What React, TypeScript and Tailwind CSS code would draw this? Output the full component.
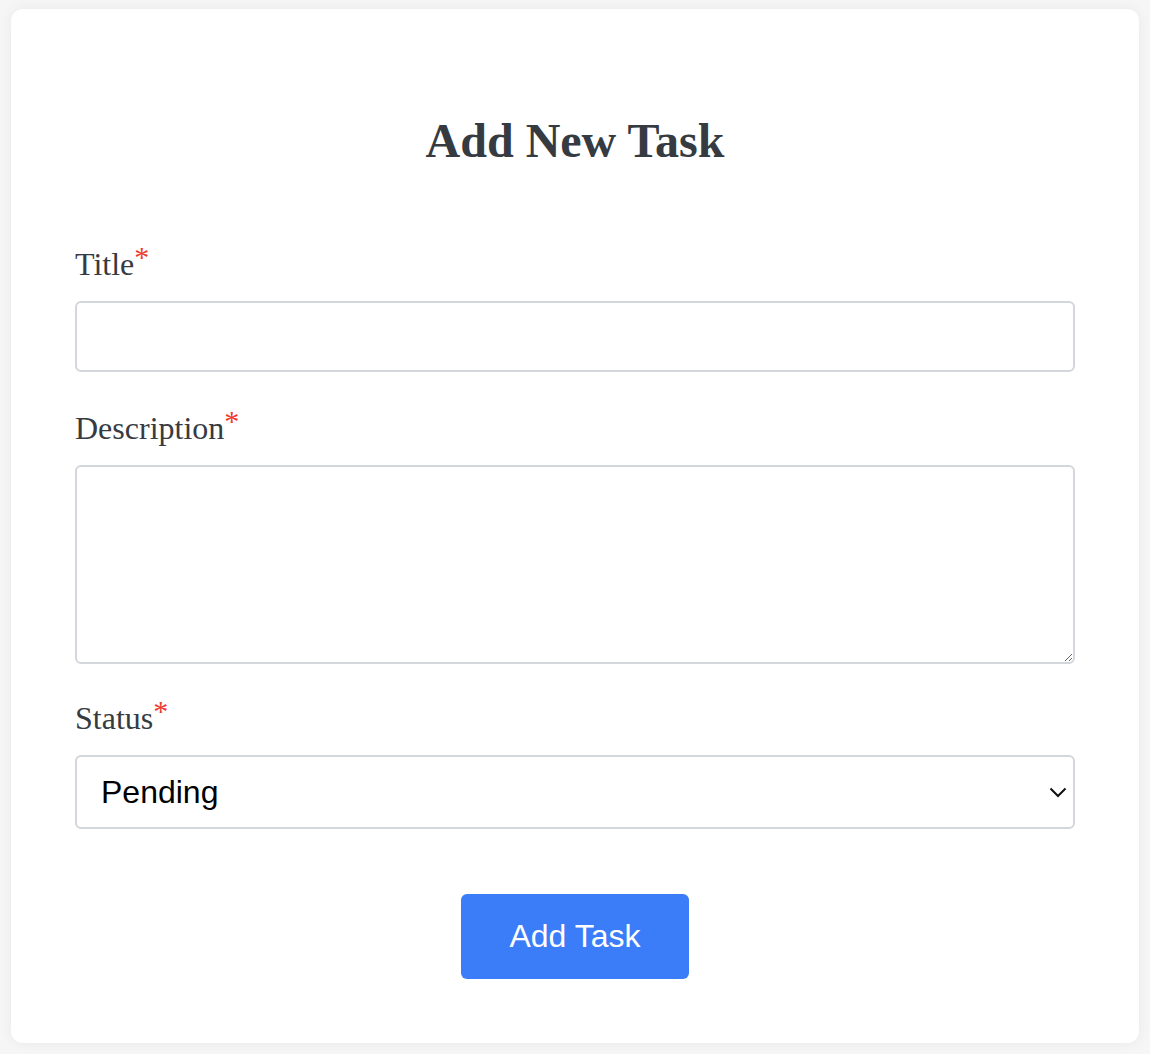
import React, { useState } from "react";

const serif = { fontFamily: '"Liberation Serif", "Times New Roman", serif' };
const sans = { fontFamily: '"Liberation Sans", Arial, sans-serif' };

const Label: React.FC<{ text: string; htmlFor: string }> = ({ text, htmlFor }) => (
  <label
    htmlFor={htmlFor}
    className="block text-[32px] leading-[40px] text-[#363b42]"
    style={serif}
  >
    {text}
    <span className="relative -top-[8px] text-[30px] text-[#ef3b2c]">*</span>
  </label>
);

const App: React.FC = () => {
  const [title, setTitle] = useState("");
  const [description, setDescription] = useState("");
  const [status, setStatus] = useState("Pending");

  // Handle form submit
  const handleSubmit = (e: React.FormEvent) => {
    e.preventDefault();
  };

  return (
    <div className="min-h-screen bg-[#f6f6f6] px-[11px] pt-[9px] pb-[10px]">
      <div className="rounded-xl bg-white px-[64px] pt-[103px] pb-[64px] shadow-[0_0_14px_rgba(0,0,0,0.06)]">
        <h1
          className="text-center text-[48px] font-bold leading-[1.2] text-[#363b42]"
          style={serif}
        >
          Add New Task
        </h1>

        <form onSubmit={handleSubmit} className="mt-[74px]">
          {/* Title */}
          <Label text="Title" htmlFor="title" />
          <input
            id="title"
            value={title}
            onChange={(e) => setTitle(e.target.value)}
            className="mt-[16px] block h-[71px] w-full rounded-md border-2 border-[#d3d6db] px-6 text-[32px] outline-none"
            style={sans}
          />

          {/* Description */}
          <div className="mt-[36px]">
            <Label text="Description" htmlFor="description" />
          </div>
          <textarea
            id="description"
            value={description}
            onChange={(e) => setDescription(e.target.value)}
            className="mt-[16px] block h-[199px] w-full rounded-md border-2 border-[#d3d6db] px-6 py-3 text-[32px] outline-none"
            style={sans}
          />

          {/* Status */}
          <div className="mt-[34px]">
            <Label text="Status" htmlFor="status" />
          </div>
          <div className="relative mt-[16px]">
            <select
              id="status"
              value={status}
              onChange={(e) => setStatus(e.target.value)}
              className="block h-[74px] w-full appearance-none rounded-md border-2 border-[#d3d6db] bg-white pl-[24px] text-[32px] text-black outline-none"
              style={sans}
            >
              <option>Pending</option>
              <option>In Progress</option>
              <option>Completed</option>
            </select>
            <svg
              className="pointer-events-none absolute right-[8px] top-[32px]"
              width="18"
              height="11"
              viewBox="0 0 18 11"
              fill="none"
            >
              <path d="M1.5 1.5 L9 9 L16.5 1.5" stroke="#111" strokeWidth="2" />
            </svg>
          </div>

          <div className="mt-[65px] flex justify-center">
            <button
              type="submit"
              className="h-[85px] w-[228px] rounded-md bg-[#3b7cf8] text-[32px] text-white"
              style={sans}
            >
              Add Task
            </button>
          </div>
        </form>
      </div>
    </div>
  );
};

export default App;
